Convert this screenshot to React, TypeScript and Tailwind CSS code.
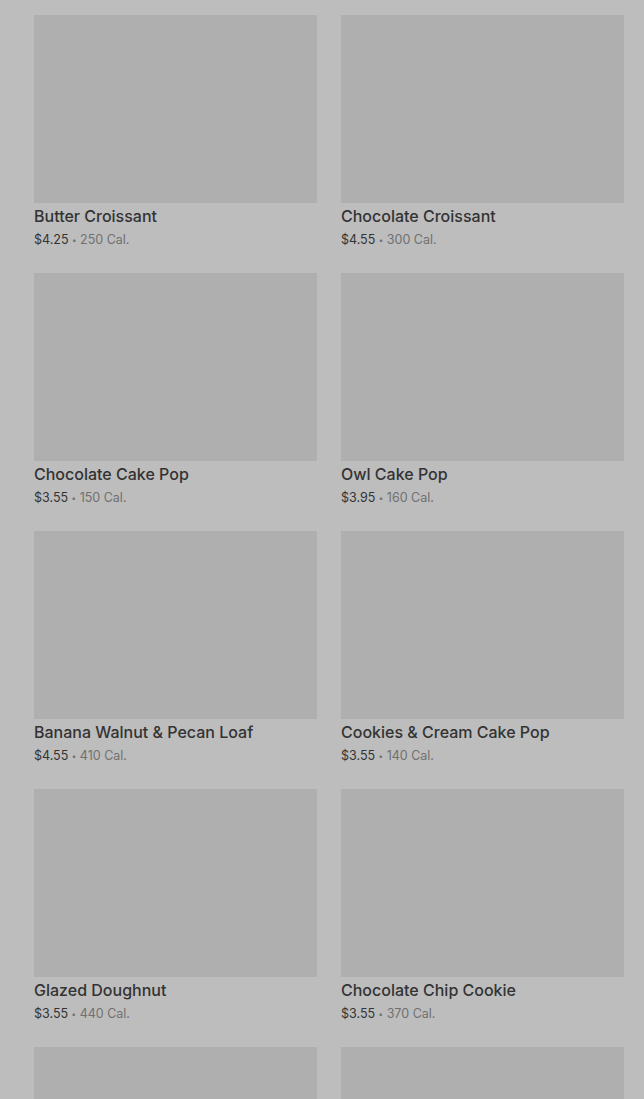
const items = [
  { name: 'Butter Croissant', price: '$4.25', cal: '250 Cal.' },
  { name: 'Chocolate Croissant', price: '$4.55', cal: '300 Cal.' },
  { name: 'Chocolate Cake Pop', price: '$3.55', cal: '150 Cal.' },
  { name: 'Owl Cake Pop', price: '$3.95', cal: '160 Cal.' },
  { name: 'Banana Walnut & Pecan Loaf', price: '$4.55', cal: '410 Cal.' },
  { name: 'Cookies & Cream Cake Pop', price: '$3.55', cal: '140 Cal.' },
  { name: 'Glazed Doughnut', price: '$3.55', cal: '440 Cal.' },
  { name: 'Chocolate Chip Cookie', price: '$3.55', cal: '370 Cal.' },
  { name: 'Lemon Loaf', price: '$3.45', cal: '470 Cal.' },
  { name: 'Blueberry Muffin', price: '$3.45', cal: '360 Cal.' },
]

export default function App() {
  return (
    <div className="h-[1099px] overflow-hidden bg-[#bdbdbd] font-['Inter',sans-serif]">
      <div className="grid grid-cols-2 gap-x-6 gap-y-[23px] pl-[34px] pr-5 pt-[15px]">
        {items.map((item) => (
          <div key={item.name}>
            <div className="h-[188px] bg-[#afafaf]" />
            <p className="pt-px text-[16px] leading-6 font-medium text-[#333333]">
              {item.name}
            </p>
            <p className="mt-[2px] text-[12.5px] leading-5 text-[#333333]">
              {item.price} <span className="text-[#707070]"><span className="text-[8px] align-[1px]">•</span> {item.cal}</span>
            </p>
          </div>
        ))}
      </div>
    </div>
  )
}
